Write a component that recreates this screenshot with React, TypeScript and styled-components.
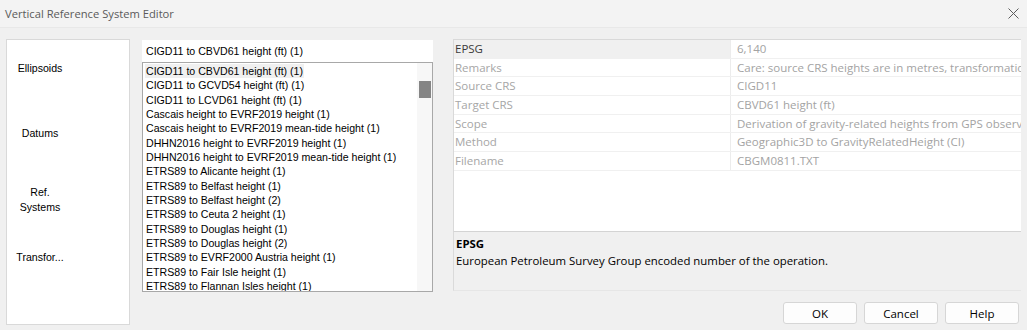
import { ReactElement } from 'react';
import styled, { createGlobalStyle } from 'styled-components';

const GlobalStyle = createGlobalStyle`
    html, body {
        margin: 0;
        padding: 0;
        background: #f0f0f0;
    }
`;

const UI_FONT = `'Open Sans', 'Noto Sans', sans-serif`;
const LIST_FONT = `'Liberation Sans', Arial, sans-serif`;

const NAV_ITEMS = [
    { label: 'Ellipsoids', dy: -6 },
    { label: 'Datums', dy: 0 },
    { label: 'Ref.\nSystems', dy: 10 },
    { label: 'Transfor...', dy: 0 },
];

const TRANSFORMS = [
    'CIGD11 to CBVD61 height (ft) (1)',
    'CIGD11 to GCVD54 height (ft) (1)',
    'CIGD11 to LCVD61 height (ft) (1)',
    'Cascais height to EVRF2019 height (1)',
    'Cascais height to EVRF2019 mean-tide height (1)',
    'DHHN2016 height to EVRF2019 height (1)',
    'DHHN2016 height to EVRF2019 mean-tide height (1)',
    'ETRS89 to Alicante height (1)',
    'ETRS89 to Belfast height (1)',
    'ETRS89 to Belfast height (2)',
    'ETRS89 to Ceuta 2 height (1)',
    'ETRS89 to Douglas height (1)',
    'ETRS89 to Douglas height (2)',
    'ETRS89 to EVRF2000 Austria height (1)',
    'ETRS89 to Fair Isle height (1)',
    'ETRS89 to Flannan Isles height (1)',
];

const PROPERTIES = [
    { name: 'EPSG', value: '6,140' },
    { name: 'Remarks', value: 'Care: source CRS heights are in metres, transformation to feet is applied' },
    { name: 'Source CRS', value: 'CIGD11' },
    { name: 'Target CRS', value: 'CBVD61 height (ft)' },
    { name: 'Scope', value: 'Derivation of gravity-related heights from GPS observations.' },
    { name: 'Method', value: 'Geographic3D to GravityRelatedHeight (CI)' },
    { name: 'Filename', value: 'CBGM0811.TXT' },
];

const App = (): ReactElement => {
    return (
        <Window>
            <GlobalStyle />
            <TitleBar>
                <Title>Vertical Reference System Editor</Title>
                <CloseButton aria-label="close">
                    <svg width="11" height="11" viewBox="0 0 11 11">
                        <path d="M0.5 0.5 L10.5 10.5 M10.5 0.5 L0.5 10.5" stroke="#5c5c5c" strokeWidth="1" />
                    </svg>
                </CloseButton>
            </TitleBar>

            <Body>
                <NavPanel>
                    {NAV_ITEMS.map((item) => (
                        <NavItem key={item.label} $dy={item.dy}>
                            {item.label}
                        </NavItem>
                    ))}
                </NavPanel>

                <ListColumn>
                    <NameEdit>CIGD11 to CBVD61 height (ft) (1)</NameEdit>
                    <ListBox>
                        <ListItems>
                            {TRANSFORMS.map((t, i) => (
                                <ListRow key={t}>
                                    <ListText $selected={i === 0}>{t}</ListText>
                                </ListRow>
                            ))}
                        </ListItems>
                        <ScrollTrack>
                            <ScrollThumb />
                        </ScrollTrack>
                    </ListBox>
                </ListColumn>

                <RightColumn>
                    <Grid>
                        {PROPERTIES.map((p, i) => (
                            <GridRow key={p.name}>
                                <NameCell $selected={i === 0}>{p.name}</NameCell>
                                <ValueCell>{p.value}</ValueCell>
                            </GridRow>
                        ))}
                    </Grid>
                    <Description>
                        <DescTitle>EPSG</DescTitle>
                        <DescText>European Petroleum Survey Group encoded number of the operation.</DescText>
                    </Description>
                    <ButtonRow>
                        <DialogButton>OK</DialogButton>
                        <DialogButton>Cancel</DialogButton>
                        <DialogButton>Help</DialogButton>
                    </ButtonRow>
                </RightColumn>
            </Body>
        </Window>
    );
};

const Window = styled.div`
    width: 1027px;
    height: 330px;
    background: #f0f0f0;
    overflow: hidden;
    display: flex;
    flex-direction: column;
`;

const TitleBar = styled.div`
    height: 28px;
    box-sizing: border-box;
    display: flex;
    align-items: center;
    justify-content: space-between;
    padding: 0 8px 0 5px;
    background: #f3f3f3;
    border-bottom: 1px solid #e8e8e8;
`;

const Title = styled.div`
    font-family: ${UI_FONT};
    font-size: 11.2px;
    color: #5a5a5a;
`;

const CloseButton = styled.div`
    width: 11px;
    height: 11px;
    display: flex;
`;

const Body = styled.div`
    display: flex;
    padding: 11px 0 0 6px;
`;

const NavPanel = styled.div`
    width: 124px;
    height: 286px;
    box-sizing: border-box;
    background: #fff;
    border: 1px solid #d9d9d9;
    display: flex;
    flex-direction: column;
`;

const NavItem = styled.div<{ $dy: number }>`
    height: 62px;
    box-sizing: border-box;
    width: 66px;
    padding: ${(p) => Math.max(p.$dy, 0)}px 0 ${(p) => Math.max(-p.$dy, 0)}px;
    display: flex;
    align-items: center;
    justify-content: center;
    text-align: center;
    white-space: pre-line;
    font-family: ${LIST_FONT};
    font-size: 10.6px;
    line-height: 15px;
    color: #000;
`;

const ListColumn = styled.div`
    width: 291px;
    margin: 1px 0 0 12px;
    display: flex;
    flex-direction: column;
`;

const NameEdit = styled.div`
    height: 22px;
    box-sizing: border-box;
    background: #fff;
    padding: 2px 4px;
    font-family: ${LIST_FONT};
    font-size: 10.6px;
    line-height: 18px;
    color: #000;
`;

const ListBox = styled.div`
    height: 230px;
    box-sizing: border-box;
    border: 1px solid #a8a8a8;
    background: #fff;
    display: flex;
    overflow: hidden;
`;

const ListItems = styled.div`
    flex: 1;
    padding: 1px 0 0 2px;
    overflow: hidden;
`;

const ListRow = styled.div`
    height: 14.33px;
    display: flex;
    align-items: center;
`;

const ListText = styled.span<{ $selected: boolean }>`
    padding: 0 1px;
    font-family: ${LIST_FONT};
    font-size: 10.6px;
    line-height: 14px;
    color: #000;
    white-space: nowrap;
    background: ${(p) => (p.$selected ? '#f0f0f0' : 'transparent')};
`;

const ScrollTrack = styled.div`
    width: 15px;
    background: #f7f7f7;
    padding-top: 18px;
    display: flex;
    justify-content: center;
`;

const ScrollThumb = styled.div`
    width: 12px;
    height: 17px;
    background: #858585;
`;

const RightColumn = styled.div`
    width: 568px;
    margin-left: 20px;
    display: flex;
    flex-direction: column;
`;

const Grid = styled.div`
    height: 193px;
    box-sizing: border-box;
    background: #fff;
    border-top: 1px solid #d9d9d9;
    border-left: 1px solid #d9d9d9;
    border-bottom: 1px solid #d4d4d4;
    display: flex;
    flex-direction: column;
`;

const GridRow = styled.div`
    height: 18.7px;
    box-sizing: border-box;
    display: flex;
    border-bottom: 1px solid #f0f0f0;
`;

const NameCell = styled.div<{ $selected: boolean }>`
    width: 277px;
    flex-shrink: 0;
    box-sizing: border-box;
    padding-left: 1px;
    border-right: 1px solid #ececec;
    background: ${(p) => (p.$selected ? '#f0f0f0' : '#fff')};
    color: ${(p) => (p.$selected ? '#3a3a3a' : '#a6a6a6')};
    font-family: ${UI_FONT};
    font-size: 11.5px;
    line-height: 18px;
    white-space: nowrap;
`;

const ValueCell = styled.div`
    flex: 1;
    min-width: 0;
    padding-left: 6px;
    color: #a3a3a3;
    font-family: ${UI_FONT};
    font-size: 11.5px;
    line-height: 18px;
    white-space: nowrap;
    overflow: hidden;
`;

const Description = styled.div`
    height: 59px;
    box-sizing: border-box;
    padding: 3px 2px 0;
    border-left: 1px solid #dadada;
    border-bottom: 1px solid #e6e6e6;
    display: flex;
    flex-direction: column;
`;

const DescTitle = styled.div`
    font-family: ${UI_FONT};
    font-size: 11.4px;
    font-weight: 700;
    line-height: 17px;
    color: #000;
`;

const DescText = styled.div`
    font-family: ${UI_FONT};
    font-size: 11.4px;
    line-height: 18px;
    color: #000;
`;

const ButtonRow = styled.div`
    display: flex;
    justify-content: flex-end;
    gap: 7px;
    padding: 11px 2px 0 0;
`;

const DialogButton = styled.button`
    width: 74px;
    height: 22px;
    box-sizing: border-box;
    background: #fdfdfd;
    border: 1px solid #d6d6d6;
    border-radius: 3px;
    font-family: ${UI_FONT};
    font-size: 11.5px;
    color: #000;
    padding: 0;
    cursor: pointer;
`;

export default App;
